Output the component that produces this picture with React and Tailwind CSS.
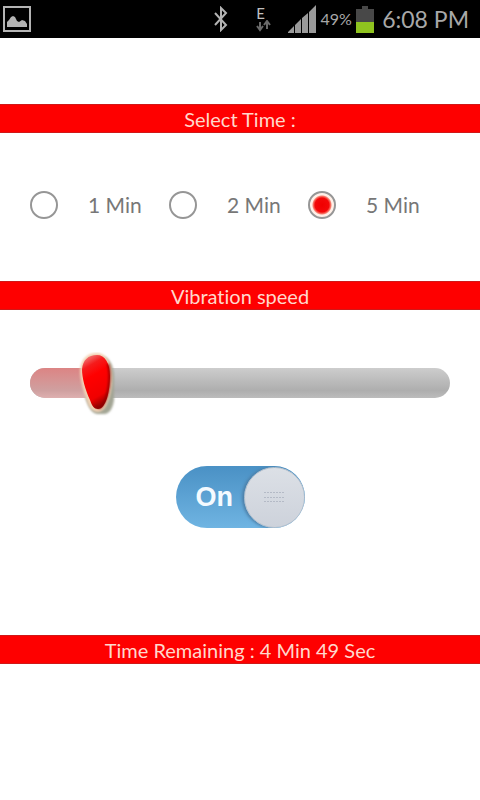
import { useState } from "react";

const TIMES = [1, 2, 5];

function StatusBar() {
  return (
    <header className="flex h-[38px] items-center justify-between bg-black pl-[2px] pr-[11px] text-[#a8a8a8]">
      {/* Picture notification */}
      <svg width="29" height="28" viewBox="0 0 29 28" aria-hidden="true">
        <rect x="2" y="2" width="26" height="24" fill="none" stroke="#b4b4b4" strokeWidth="2" />
        <path d="M5 22v-5l2-2 2-3 2-1 2 1 2 4 2 1 3-2 3 1 2 3v3z" fill="#b4b4b4" />
      </svg>

      <div className="flex items-center">
        {/* Bluetooth */}
        <svg className="mr-7" width="15" height="26" viewBox="0 0 15 26" fill="none" stroke="#b4b4b4" strokeWidth="2" aria-hidden="true">
          <path d="M2 7l11 12-5 5V2l5 5L2 19" />
        </svg>

        {/* Edge data */}
        <div className="mr-3 flex w-5 flex-col">
          <span className="text-[15px] leading-[14px] text-[#c0c0c0]">E</span>
          <svg width="20" height="12" viewBox="0 0 20 12" fill="none" stroke="#6a6a6a" strokeWidth="2" aria-hidden="true">
            <path d="M4 2v8M1 6l3 4 3-4M11 9V2M8 5l3-4 3 4" />
          </svg>
        </div>

        {/* Signal */}
        <svg className="mr-1" width="28" height="28" viewBox="0 0 28 28" fill="#9a9a9a" aria-hidden="true">
          <path d="M0 28v-1l6-6v7zM7 28v-8l6-6v14zM14 28V13l6-5v20zM21 28V7l7-7v28z" />
        </svg>

        <span className="mr-1 w-8 text-center text-[16px] leading-5">49%</span>

        {/* Battery */}
        <svg className="mr-2" width="18" height="27" viewBox="0 0 18 27" aria-hidden="true">
          <path d="M6 0h6v3h6v13H0V3h6z" fill="#484848" />
          <path d="M0 16h18v11H0z" fill="#8fc31f" />
        </svg>

        <span className="whitespace-nowrap text-[23px] leading-7">6:08 PM</span>
      </div>
    </header>
  );
}

function Banner({ children }) {
  return (
    <h2 className="h-[29px] border-y border-[#d01818] bg-[#fe0000] text-center text-[20px] leading-[29px] text-[#ffd8cc]">
      {children}
    </h2>
  );
}

function TimePicker({ value, onChange }) {
  return (
    <div className="flex h-[148px] items-center pb-1 pl-[30px]" role="radiogroup" aria-label="Select Time">
      {TIMES.map(t => (
        <label key={t} className="flex w-[139px] items-center whitespace-nowrap text-[21px] leading-7 text-[#777]">
          <input
            type="radio"
            name="time"
            value={t}
            checked={value === t}
            onChange={() => onChange(t)}
            className="mr-[30px] size-7 shrink-0 appearance-none rounded-full border-2 border-[#969696] bg-white checked:bg-[radial-gradient(circle_at_center,#f00000_0px,#f40808_7px,#f88070_9px,#fff0e8_10px)]"
          />
          {t} Min
        </label>
      ))}
    </div>
  );
}

function SpeedSlider({ value, onChange }) {
  return (
    <div className="relative mx-[30px] h-[30px]">
      <div className="h-full overflow-hidden rounded-full bg-linear-to-b from-[#cdcdcd] via-[#aeaeae] via-75% to-[#bcbcbc]">
        <div
          className="h-full bg-linear-to-b from-[#dc8484] via-[#cfa0a0] via-75% to-[#deb0b0]"
          style={{ width: `${value}%` }}
        />
      </div>
      <input
        type="range"
        min="0"
        max="100"
        aria-label="Vibration speed"
        value={value}
        onChange={e => onChange(Number(e.target.value))}
        className="absolute inset-0 h-full w-full cursor-pointer opacity-0"
      />
      {/* Thumb */}
      <div
        className="pointer-events-none absolute -top-4 -translate-x-1/2"
        style={{ left: `${value}%` }}
      >
        <svg width="38" height="64" viewBox="0 0 38 64" aria-hidden="true">
          <defs>
            <linearGradient id="thumb" x1="0.2" y1="0" x2="0.5" y2="1">
              <stop offset="0" stopColor="#f08080" />
              <stop offset="0.2" stopColor="#f51c1c" />
              <stop offset="0.4" stopColor="#ff0000" />
              <stop offset="0.8" stopColor="#f00000" />
              <stop offset="1" stopColor="#900000" />
            </linearGradient>
            <filter id="soft" x="-20%" y="-20%" width="140%" height="140%">
              <feGaussianBlur stdDeviation="1" />
            </filter>
          </defs>
          <path d="M22 4c9 0 14 9 14 22v22c-1 7-4 14-10 14H19c-6-1-9-8-12-17z" fill="#a3a594" filter="url(#soft)" />
          <path d="M19 1C9 1 3 7 2 18c0 9 3 20 7 31 2 7 6 11 11 11 9 0 14-20 14-35C34 11 28 1 19 1z" fill="#f3d2b4" filter="url(#soft)" />
          <path d="M19 3C10 3 5 8 4 17c0 9 3 20 8 31 2 6 4 9 8 9 8 0 12-18 12-33C32 11 27 3 19 3z" fill="url(#thumb)" />
          <path d="M30 12c4 13 0 34-6 42-2 3-4 2-6 0" fill="none" stroke="#8d0000" strokeWidth="2" filter="url(#soft)" />
        </svg>
      </div>
    </div>
  );
}

function PowerSwitch({ on, onChange }) {
  return (
    <label
      className={`relative flex h-[62px] w-[129px] cursor-pointer items-center overflow-hidden rounded-full bg-linear-to-b ${
        on
          ? "justify-between from-[#4a91c5] to-[#6fb4e2] pl-5"
          : "flex-row-reverse justify-between from-[#999] to-[#bbb] pr-5"
      }`}
    >
      <input
        type="checkbox"
        role="switch"
        checked={on}
        onChange={e => onChange(e.target.checked)}
        className="absolute inset-0 h-full w-full cursor-pointer opacity-0"
      />
      <span className="font-['Liberation_Sans',sans-serif] text-[27px] font-bold leading-8 text-[#f4faff]">
        {on ? "On" : "Off"}
      </span>
      <span className="flex size-[61px] items-center justify-center rounded-full border border-[#b6c0cc] bg-linear-to-b from-[#dce0e6] to-[#cdd2db] shadow-[-2px_0_3px_#4c7ea6]">
        <svg width="20" height="12" viewBox="0 0 20 12" stroke="#b4bac6" strokeDasharray="2 1" aria-hidden="true">
          <path d="M0 1.5h20M0 6.5h20M0 10.5h20" />
        </svg>
      </span>
    </label>
  );
}

function App() {
  const [minutes, setMinutes] = useState(5);
  const [speed, setSpeed] = useState(16);
  const [on, setOn] = useState(true);

  return (
    <div className="min-h-screen bg-white font-['Lato',sans-serif] [font-variant-ligatures:none]">
      <StatusBar />

      <main className="pt-[66px]">
        <Banner>Select Time :</Banner>
        <TimePicker value={minutes} onChange={setMinutes} />

        <Banner>Vibration speed</Banner>
        <div className="pt-[58px]">
          <SpeedSlider value={speed} onChange={setSpeed} />
        </div>

        <div className="flex justify-center pb-[107px] pt-[68px]">
          <PowerSwitch on={on} onChange={setOn} />
        </div>

        <Banner>Time Remaining : 4 Min 49 Sec</Banner>
      </main>
    </div>
  );
}

export default App;
